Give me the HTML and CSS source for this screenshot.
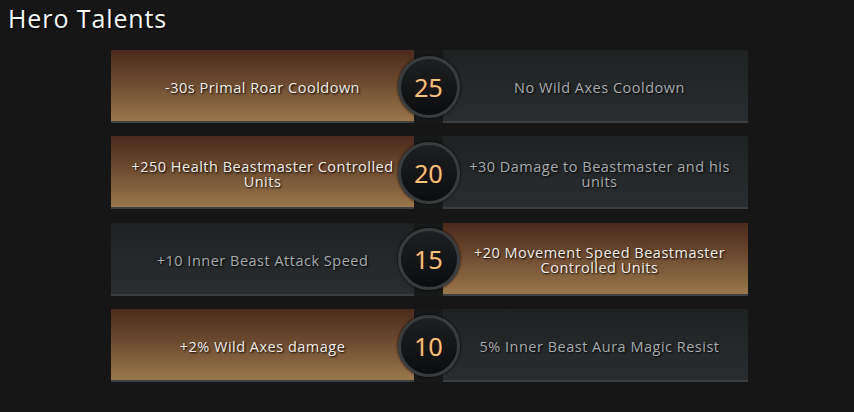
FILE: index.html
```html
<!DOCTYPE html>
<html>
<head>
<meta charset="utf-8">
<link rel="stylesheet" href="styles.css">
</head>
<body>
<h1 class="title">Hero Talents</h1>
<div class="tree">
  <div class="row">
    <div class="cell picked">-30s Primal Roar Cooldown</div>
    <div class="mid"><div class="lvl">25</div></div>
    <div class="cell">No Wild Axes Cooldown</div>
  </div>
  <div class="row">
    <div class="cell picked">+250 Health Beastmaster Controlled Units</div>
    <div class="mid"><div class="lvl">20</div></div>
    <div class="cell">+30 Damage to Beastmaster and his units</div>
  </div>
  <div class="row">
    <div class="cell">+10 Inner Beast Attack Speed</div>
    <div class="mid"><div class="lvl">15</div></div>
    <div class="cell picked">+20 Movement Speed Beastmaster Controlled Units</div>
  </div>
  <div class="row">
    <div class="cell picked">+2% Wild Axes damage</div>
    <div class="mid"><div class="lvl">10</div></div>
    <div class="cell">5% Inner Beast Aura Magic Resist</div>
  </div>
</div>
</body>
</html>
```
FILE: styles.css
```css
html, body {
  background: #161616;
}
body {
  margin: 0;
  padding: 0 8px;
  font-family: "Open Sans", "Noto Sans", sans-serif;
}
.title {
  margin: 2px 0 15px 0;
  font-size: 25px;
  font-weight: 400;
  line-height: 33px;
  letter-spacing: 0.9px;
  color: #f6f8fa;
  text-shadow: 1px 1px 2px #000;
}
.tree {
  margin-left: 103px;
  display: flex;
  flex-direction: column;
  gap: 13.4px;
}
.row {
  display: flex;
  height: 73px;
}
.cell {
  box-sizing: border-box;
  width: 303px;
  height: 73px;
  padding: 4px 14px 0 14px;
  display: flex;
  align-items: center;
  justify-content: center;
  text-align: center;
  font-size: 14.5px;
  letter-spacing: 0.5px;
  line-height: 15px;
  color: #a6abaf;
  text-shadow: 1px 1px 2px #000;
  background: linear-gradient(to bottom, #1f2223, #2a2d2f);
  border-bottom: 2px solid #3b3e40;
}
.row .cell:last-child {
  width: 305px;
  padding: 4px 12px 0 20px;
}
.cell.picked {
  color: #f5efe8;
  background: linear-gradient(to bottom, #4a2a1b, #6c4a30 45%, #9a774b);
  border-bottom-color: #3e4042;
}
.mid {
  width: 29px;
  display: flex;
  align-items: center;
  justify-content: center;
  background: #181919;
}
.lvl {
  flex-shrink: 0;
  box-sizing: border-box;
  width: 62px;
  height: 62px;
  margin: 0 -17px;
  position: relative;
  z-index: 1;
  border-radius: 50%;
  border: 3px solid #393c3e;
  background: linear-gradient(to bottom, #1d2022, #0b0c0d);
  box-shadow: 0 0 3px #000;
  display: flex;
  align-items: center;
  justify-content: center;
  font-size: 25px;
  color: #f6c47e;
  text-shadow: -1px 0 0 rgba(200, 40, 20, 0.6);
}
```
